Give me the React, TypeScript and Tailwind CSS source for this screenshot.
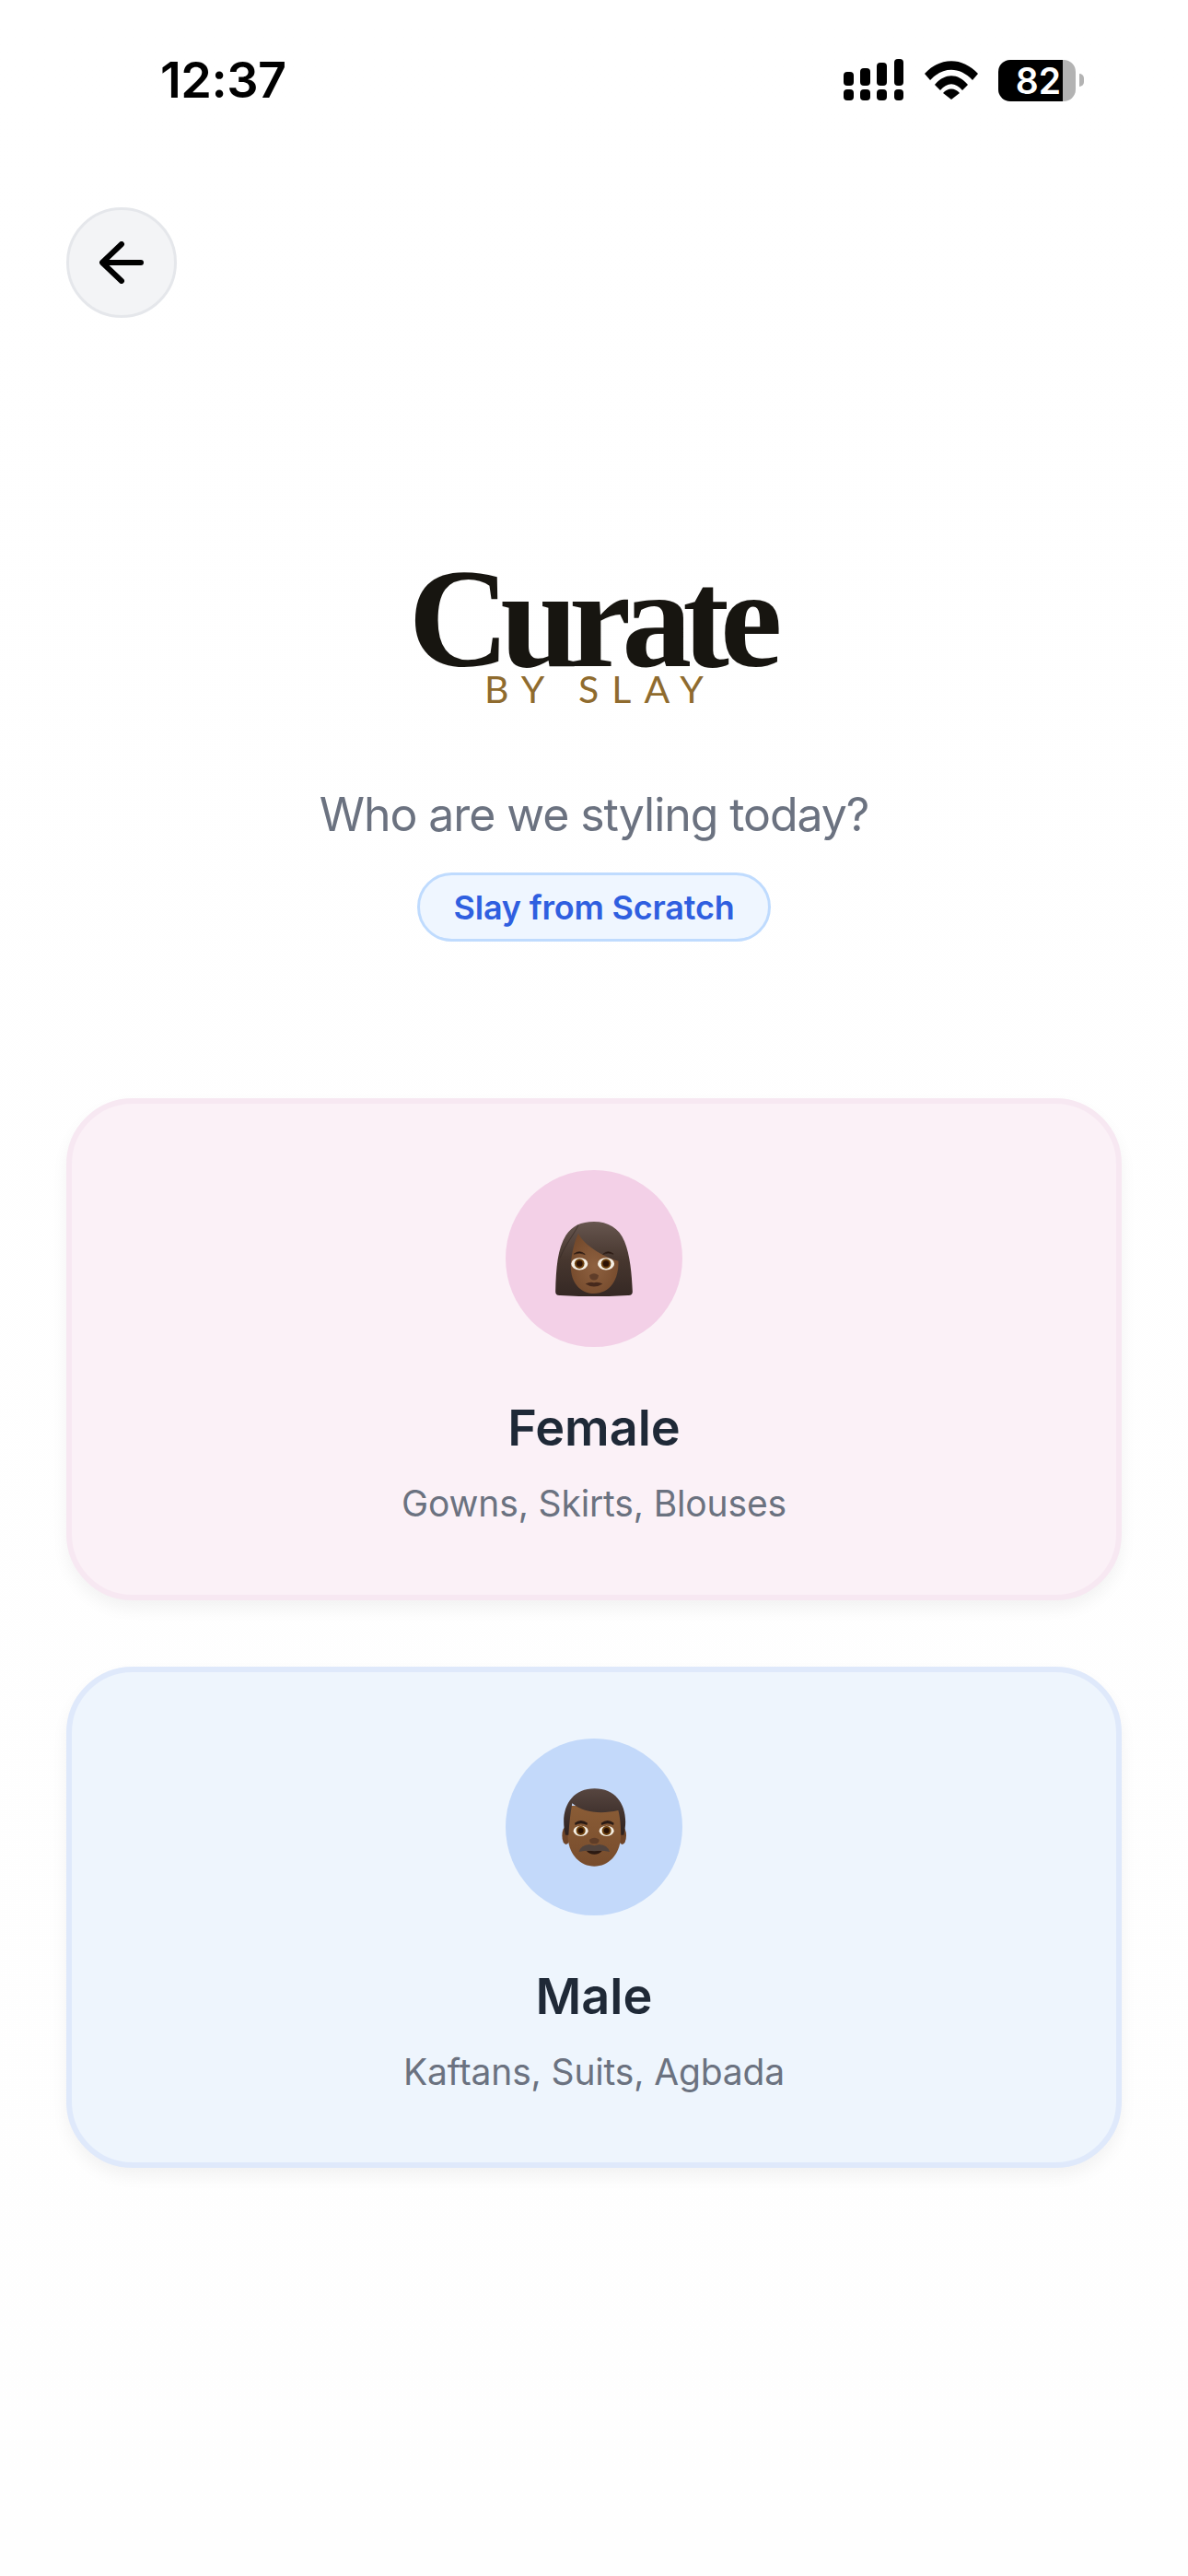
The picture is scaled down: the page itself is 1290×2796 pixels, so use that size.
import React from "react";

function StatusIcons() {
  return (
    <div className="flex items-center">
      <svg width="65" height="46" viewBox="0 0 65 46" fill="#000">
        <rect x="0" y="14" width="11" height="15" rx="4" />
        <rect x="18" y="10" width="11" height="19" rx="4" />
        <rect x="36" y="4" width="11" height="25" rx="4" />
        <rect x="55" y="0" width="10" height="29" rx="4" />
        <rect x="0" y="33" width="11" height="12" rx="4" />
        <rect x="18" y="33" width="11" height="12" rx="4" />
        <rect x="36" y="33" width="11" height="12" rx="4" />
        <rect x="55" y="33" width="10" height="12" rx="4" />
      </svg>
      <svg className="ml-[23px]" width="58" height="42" viewBox="0 0 58 42" fill="#000">
        <path d="M0 14 C17 -4.5 41 -4.5 58 14 L52 21 C38 6 20 6 6 21 Z" />
        <path d="M11 26 C22 13 36 13 47 26 L41 32 C33 23 25 23 17 32 Z" />
        <path d="M20 35 C25 29 33 29 38 35 L29 42 Z" />
      </svg>
      <div className="ml-[22px] flex items-center">
        <div className="flex h-[45px] w-[70px] items-center justify-end rounded-l-[13px] bg-black pr-[2px] text-[39px] leading-none font-semibold text-white">
          82
        </div>
        <div className="h-[45px] w-[14px] rounded-r-[13px] bg-[#b3b3b3]" />
        <div className="ml-[4px] h-[14px] w-[5px] rounded-r-full bg-[#b3b3b3]" />
      </div>
    </div>
  );
}

function BackArrow() {
  return (
    <svg width="48" height="46" viewBox="0 0 48 46" fill="none" stroke="#000" strokeWidth="6" strokeLinecap="round" strokeLinejoin="round">
      <path d="M45 23 H4" />
      <path d="M24 3 L3 23 L24 43" />
    </svg>
  );
}

function FemaleEmoji() {
  return (
    <svg width="84" height="81" viewBox="190 198 250 242">
      <defs>
        <linearGradient id="fh" x1="0" y1="0" x2="0" y2="1">
          <stop offset="0" stopColor="#67564f" />
          <stop offset="0.5" stopColor="#47372f" />
          <stop offset="1" stopColor="#352824" />
        </linearGradient>
        <radialGradient id="ff" cx="0.5" cy="0.55" r="0.6">
          <stop offset="0" stopColor="#8e6140" />
          <stop offset="1" stopColor="#74492b" />
        </radialGradient>
      </defs>
      <path d="M190 425 C192 345 197 285 224 242 C244 212 272 198 315 198 C360 198 396 218 414 262 C432 305 438 370 440 425 Q440 438 425 437 C350 442 280 442 205 437 Q190 438 190 425 Z" fill="url(#fh)" />
      <path d="M240 345 C240 315 248 270 264 236 C284 276 340 308 394 326 C396 385 368 431 315 431 C268 431 240 392 240 345 Z" fill="url(#ff)" />
      <path d="M264 210 C250 240 222 270 205 315" fill="none" stroke="#362925" strokeWidth="3" opacity="0.6" />
      <path d="M250 303 Q268 288 286 304 Q268 296 250 303 Z" fill="#2a1a12" stroke="#2a1a12" strokeWidth="2" />
      <path d="M344 304 Q360 288 378 303 Q360 296 344 304 Z" fill="#2a1a12" stroke="#2a1a12" strokeWidth="2" />
      <ellipse cx="268" cy="335" rx="27" ry="20" fill="#f5efe4" />
      <ellipse cx="354" cy="335" rx="27" ry="20" fill="#f5efe4" />
      <circle cx="268" cy="334" r="16" fill="#6f4310" />
      <circle cx="354" cy="334" r="16" fill="#6f4310" />
      <circle cx="268" cy="334" r="10" fill="#2c1206" />
      <circle cx="354" cy="334" r="10" fill="#2c1206" />
      <path d="M300 372 Q315 360 330 372 Q328 388 315 388 Q302 388 300 372 Z" fill="#5f3d29" />
      <path d="M287 400 Q302 392 315 396 Q328 392 343 400 Q315 418 287 400 Z" fill="#46291c" />
    </svg>
  );
}

function MaleEmoji() {
  return (
    <svg width="70" height="85" viewBox="208 183 210 255">
      <defs>
        <linearGradient id="mh" x1="0" y1="0" x2="0" y2="1">
          <stop offset="0" stopColor="#574640" />
          <stop offset="1" stopColor="#2e221f" />
        </linearGradient>
        <linearGradient id="mf" x1="0" y1="0" x2="0" y2="1">
          <stop offset="0" stopColor="#8a5c36" />
          <stop offset="1" stopColor="#774c2c" />
        </linearGradient>
      </defs>
      <ellipse cx="222" cy="337" rx="13" ry="29" fill="#6e4529" />
      <ellipse cx="405" cy="337" rx="13" ry="29" fill="#6e4529" />
      <path d="M228 240 L400 240 L400 345 C396 400 360 437 314 437 C268 437 232 400 228 345 Z" fill="url(#mf)" />
      <path d="M220 335 C200 255 235 184 315 184 C395 184 430 255 410 335 L401 335 C400 300 398 278 392 255 C335 268 275 262 242 232 C236 265 232 300 230 335 Z" fill="url(#mh)" />
      <path d="M250 296 Q270 280 292 296 L290 303 Q270 293 252 303 Z" fill="#2a1b15" />
      <path d="M336 296 Q358 280 378 296 L376 303 Q358 293 338 303 Z" fill="#2a1b15" />
      <ellipse cx="270" cy="322" rx="24" ry="17" fill="#f5efe4" />
      <ellipse cx="354" cy="322" rx="24" ry="17" fill="#f5efe4" />
      <circle cx="270" cy="321" r="15" fill="#6f4310" />
      <circle cx="354" cy="321" r="15" fill="#6f4310" />
      <circle cx="270" cy="321" r="9" fill="#2a1205" />
      <circle cx="354" cy="321" r="9" fill="#2a1205" />
      <path d="M298 350 Q314 338 330 350 Q330 364 314 364 Q298 364 298 350 Z" fill="#5f3d28" />
      <path d="M288 386 L340 386 Q330 398 314 398 Q298 398 288 386 Z" fill="#2c1a12" />
      <path d="M264 390 Q270 368 298 366 L314 370 L330 366 Q358 368 364 390 Q335 384 314 388 Q293 384 264 390 Z" fill="#51433d" />
    </svg>
  );
}

function Card({
  tone,
  title,
  sub,
  children,
}: {
  tone: "pink" | "blue";
  title: string;
  sub: string;
  children: React.ReactNode;
}) {
  const pink = tone === "pink";
  return (
    <div
      className={
        pink
          ? "flex h-[545px] flex-col items-center rounded-[72px] border-[6px] border-[#f7e8f2] bg-[#fbf1f7] pt-[72px] shadow-[0_9px_18px_rgba(0,0,0,0.05)]"
          : "flex h-[544px] flex-col items-center rounded-[72px] border-[6px] border-[#dfe9fb] bg-[#eef5fd] pt-[72px] shadow-[0_9px_18px_rgba(0,0,0,0.05)]"
      }
    >
      <div
        className={
          pink
            ? "flex h-[192px] w-[192px] items-center justify-center rounded-full bg-[#f3d0e7]"
            : "flex h-[192px] w-[192px] items-center justify-center rounded-full bg-[#c3d9fa]"
        }
      >
        {children}
      </div>
      <div className="mt-[52px] text-[54px] leading-[72px] font-semibold text-[#1f2937]">{title}</div>
      <div className="mt-[19px] text-[39px] leading-[54px] tracking-[-0.15px] text-[#6b7280]">{sub}</div>
    </div>
  );
}

export default function App() {
  return (
    <div className="min-h-[2796px] w-[1290px] bg-gradient-to-b from-white to-[#fefefe] font-['Inter',sans-serif]">
      <div className="flex h-[174px] items-center justify-between pr-[113px] pl-[174px]">
        <span className="text-[54px] leading-none font-semibold tracking-[-0.5px] text-black">12:37</span>
        <StatusIcons />
      </div>
      <div className="mt-[51px] ml-[72px] flex h-[120px] w-[120px] items-center justify-center rounded-full border-[3px] border-[#e5e7eb] bg-[#f3f4f6]">
        <BackArrow />
      </div>
      <div className="mt-[267px] flex flex-col items-center">
        <div className="pr-[7px] font-['Liberation_Serif',serif] text-[152px] leading-[120px] font-bold tracking-[-10px] text-[#171510]">
          Curate
        </div>
        <div className="mt-[1px] pl-[14px] font-['Lato',sans-serif] text-[41px] leading-[30px] font-normal tracking-[14px] text-[#8f6b2e]">
          BY SLAY
        </div>
        <div className="mt-[85px] text-[50px] leading-[72px] font-normal tracking-[-1.08px] text-[#6b7280]">Who are we styling today?</div>
        <div className="mt-[27px] flex h-[75px] w-[384px] items-center justify-center rounded-full border-[3px] border-[#bfdbfe] bg-[#eff6ff] text-[36px] font-semibold tracking-[-0.2px] text-[#2f5fe0]">
          Slay from Scratch
        </div>
      </div>
      <div className="mt-[170px] flex flex-col gap-[72px] px-[72px]">
        <Card tone="pink" title="Female" sub="Gowns, Skirts, Blouses">
          <FemaleEmoji />
        </Card>
        <Card tone="blue" title="Male" sub="Kaftans, Suits, Agbada">
          <MaleEmoji />
        </Card>
      </div>
    </div>
  );
}
